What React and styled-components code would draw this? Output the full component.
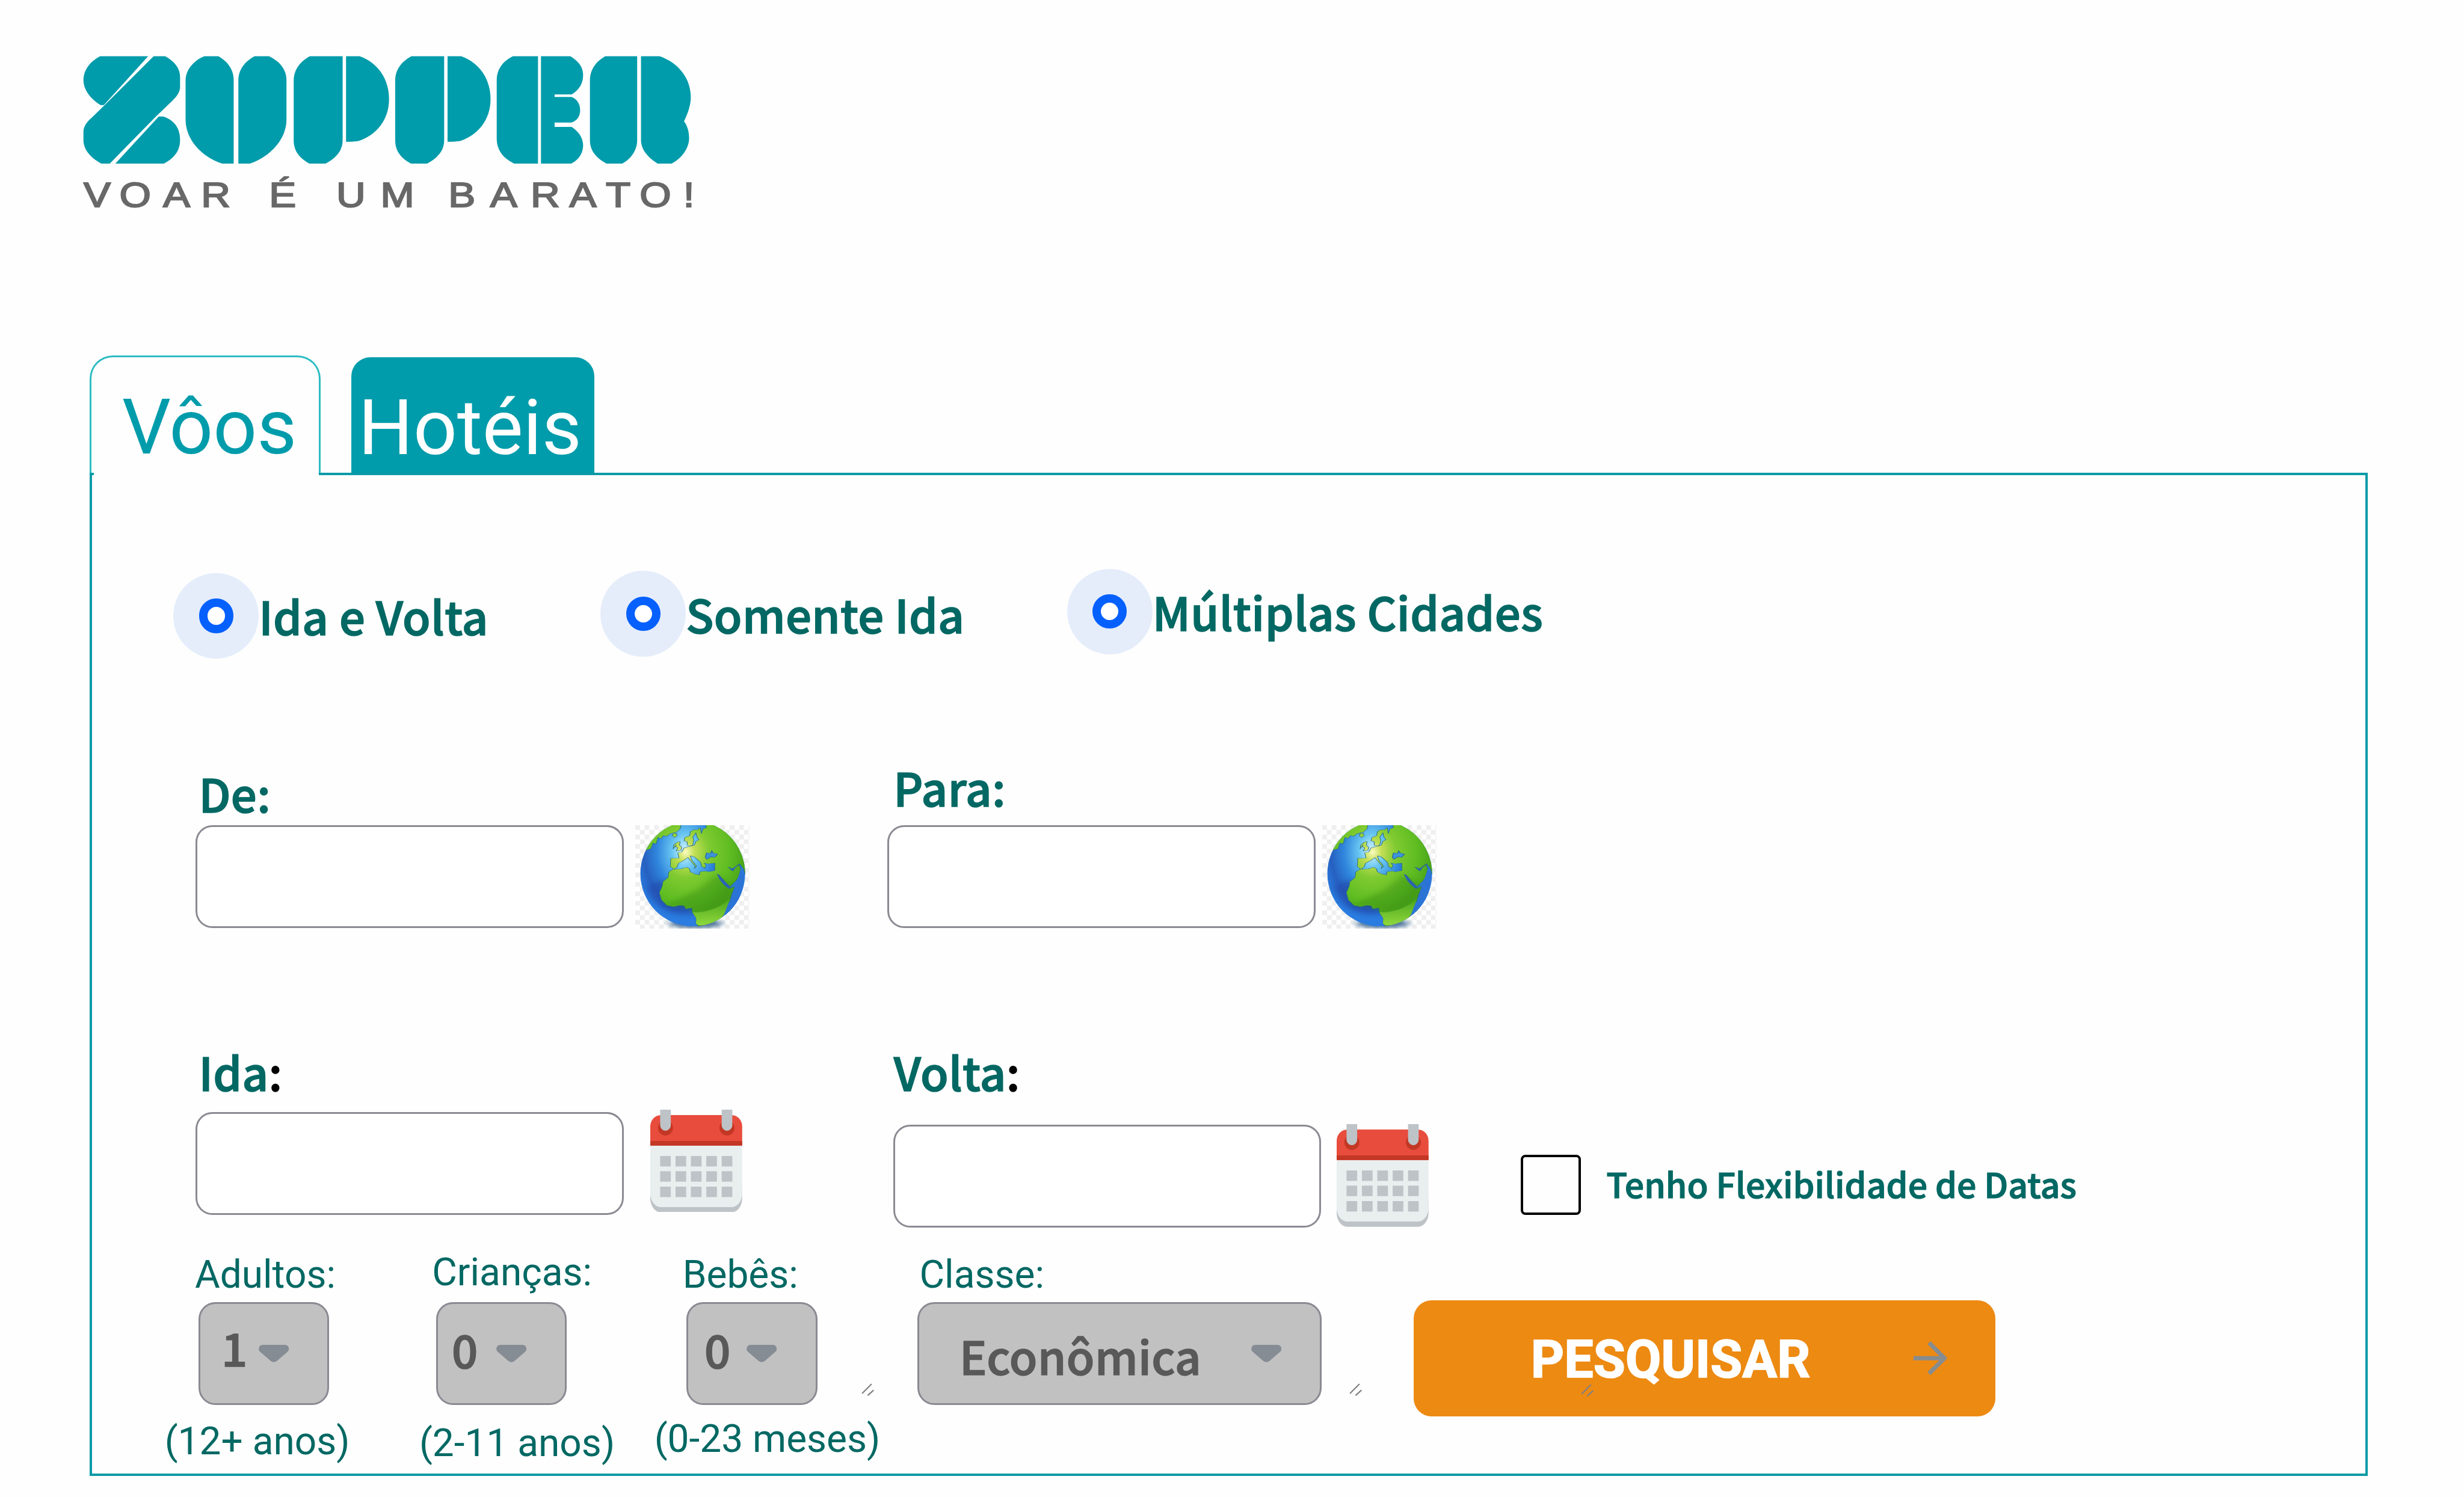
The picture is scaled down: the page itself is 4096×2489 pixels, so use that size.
import React from "react";
import styled, { createGlobalStyle, css } from "styled-components";

/* The page is designed on a 4800-unit wide canvas; 1rem = 100 units. */
const u = (n) => `${n / 100}rem`;

const color = {
  teal: "#009cab",
  line: "#0a9aa7",
  tabLine: "#2dbcc2",
  ink: "#036863",
  border: "#8a8a93",
  field: "#c1c1c2",
  value: "#595959",
  icon: "#868c93",
  orange: "#ed8a12",
  blue: "#0560fd",
  halo: "#e5edfb",
};

/* Medium with a thin stroke gives a semibold weight. */
const sans = css`
  font-family: "Noto Sans CJK JP", "Noto Sans CJK SC", "Noto Sans", sans-serif;
  font-weight: 500;
  -webkit-text-stroke: 0.021em currentColor;
  letter-spacing: 0.0055em;
`;
const roboto = css`
  font-family: Roboto, "Liberation Sans", sans-serif;
`;

const GlobalStyle = createGlobalStyle`
  html { font-size: 85.33333px; }
  body { margin: 0; background: #fefefe; overflow: hidden; }
  *, *::before, *::after { box-sizing: border-box; }
`;

const Page = styled.main`
  width: ${u(4800)};
  height: ${u(2917)};
  overflow: hidden;
`;

const Header = styled.header`
  height: ${u(692)};
  padding: ${u(109.3)} 0 0 ${u(162)};
  display: flex;
  flex-direction: column;
  align-items: flex-start;
`;
const LogoMark = styled.svg`
  display: block;
  width: ${u(1184)};
  height: ${u(209.7)};
`;
const Tagline = styled.svg`
  display: block;
  width: ${u(1240)};
  height: ${u(110)};
`;

const Tabs = styled.nav`
  position: relative;
  z-index: 1;
  display: flex;
  align-items: flex-end;
  height: ${u(229)};
  padding-left: ${u(175)};
`;
const Tab = styled.button`
  ${roboto}
  position: relative;
  margin: 0;
  font-size: ${u(150)};
  font-weight: 400;
  line-height: 1;
  text-align: left;
  white-space: nowrap;
  display: flex;
  align-items: flex-end;
  ${(p) =>
    p.$active
      ? css`
          width: ${u(450)};
          height: ${u(229)};
          padding: 0 0 ${u(13.5)} ${u(59)};
          color: ${color.teal};
          background: #fefefe;
          border: ${u(4)} solid ${color.tabLine};
          border-bottom: 0;
          border-radius: ${u(45)} ${u(45)} 0 0;
          &::after {
            content: "";
            position: absolute;
            left: ${u(4)};
            right: 0;
            bottom: ${u(-6)};
            height: ${u(7)};
            background: #fefefe;
          }
        `
      : css`
          width: ${u(474)};
          height: ${u(225)};
          margin-left: ${u(59)};
          padding: 0 0 ${u(13)} ${u(14)};
          color: #fff;
          background: ${color.teal};
          border: 0;
          border-radius: ${u(37)} ${u(37)} 0 0;
        `}
`;

const Panel = styled.section`
  width: ${u(4438)};
  height: ${u(1955)};
  margin-left: ${u(175)};
  border: ${u(5)} solid ${color.line};
`;
const Row = styled.div`
  display: flex;
  align-items: flex-start;
  height: ${(p) => u(p.$h)};
  padding-left: ${(p) => u(p.$x)};
`;

const RadioOption = styled.label`
  display: flex;
  align-items: center;
  width: ${(p) => u(p.$w)};
  margin-top: ${(p) => u(p.$top)};
`;
const Halo = styled.span`
  flex: none;
  display: flex;
  align-items: center;
  justify-content: center;
  width: ${u(166.5)};
  height: ${u(166.5)};
  border-radius: 50%;
  background: ${color.halo};
`;
const Ring = styled.span`
  width: ${u(67)};
  height: ${u(67)};
  border: ${u(17)} solid ${color.blue};
  border-radius: 50%;
  background: #fff;
`;
const OptionText = styled.span`
  ${sans}
  font-size: ${u(89)};
  line-height: 1;
  color: ${color.ink};
  white-space: nowrap;
`;

const Field = styled.div`
  flex: none;
  width: ${(p) => u(p.$w)};
`;
const FieldLabel = styled.div`
  ${sans}
  display: flex;
  align-items: flex-end;
  height: ${(p) => u(p.$slot)};
  padding-bottom: ${(p) => u(p.$rise)};
  padding-left: ${(p) => u(p.$indent)};
  font-size: ${u(89)};
  line-height: 1;
  color: ${color.ink};
  white-space: nowrap;
`;
const SmallLabel = styled(FieldLabel)`
  ${roboto}
  font-weight: 400;
  font-size: ${u(75)};
  letter-spacing: 0;
  -webkit-text-stroke: 0;
`;
const Black = styled.span`
  color: #000;
`;
const FieldLine = styled.div`
  display: flex;
  align-items: ${(p) => p.$align || "flex-start"};
  padding-left: ${(p) => u(p.$indent || 0)};
`;
const TextBox = styled.input`
  display: block;
  width: ${u(834)};
  height: ${u(200.7)};
  margin: 0;
  padding: 0 ${u(40)};
  border: ${u(4)} solid ${color.border};
  border-radius: ${u(33)};
  background: #fff;
  outline: none;
`;
const GlobeSvg = styled.svg`
  display: block;
  width: ${u(222.5)};
  height: ${u(202)};
  margin-left: ${(p) => u(p.$gap)};
`;
const CalendarSvg = styled.svg`
  display: block;
  width: ${u(179)};
  height: ${u(200)};
  margin-left: ${(p) => u(p.$gap)};
  margin-top: ${(p) => u(p.$lift)};
`;

const CheckOption = styled.label`
  display: flex;
  align-items: center;
  margin-top: ${u(350)};
`;
const CheckBox = styled.span`
  width: ${u(116.5)};
  height: ${u(117)};
  border: ${u(4.8)} solid #000;
  border-radius: ${u(9)};
`;
const CheckText = styled.span`
  ${sans}
  margin-left: ${u(50)};
  padding-bottom: ${u(5)};
  font-size: ${u(67)};
  letter-spacing: 0.001em;
  line-height: 1;
  color: ${color.ink};
  white-space: nowrap;
`;

const Select = styled.div`
  flex: none;
  display: flex;
  align-items: center;
  width: ${(p) => u(p.$w)};
  height: ${u(200.7)};
  padding-left: ${(p) => u(p.$pad)};
  border: ${u(4)} solid ${color.border};
  border-radius: ${u(33)};
  background: ${color.field};
`;
const Value = styled.span`
  ${sans}
  flex: none;
  width: ${(p) => u(p.$w)};
  padding-top: ${(p) => u(p.$down || 0)};
  padding-bottom: ${(p) => u(p.$up || 0)};
  font-size: ${u(89)};
  line-height: 1;
  color: ${color.value};
`;
const CaretSvg = styled.svg`
  flex: none;
  display: block;
  width: ${u(59)};
  height: ${u(34)};
`;
const Hint = styled.div`
  ${roboto}
  margin-top: ${(p) => u(p.$top)};
  margin-left: ${u(-4)};
  font-size: ${u(75)};
  line-height: 1;
  color: ${color.ink};
  white-space: nowrap;
`;
const gripBase = css`
  display: block;
  width: ${u(25)};
  height: ${u(25)};
`;
const GripSvg = styled.svg`
  ${gripBase}
  margin-left: ${(p) => u(p.$gap)};
  margin-bottom: ${u(17)};
`;
const FloatingGrip = styled.svg`
  ${gripBase}
  position: absolute;
  left: ${u(326)};
  top: ${u(163)};
`;

const SearchButton = styled.button`
  ${roboto}
  position: relative;
  flex: none;
  display: flex;
  align-items: center;
  width: ${u(1133)};
  height: ${u(225.5)};
  margin: ${u(104.3)} 0 0 ${u(1)};
  padding: 0 0 0 ${u(228)};
  border: 0;
  border-radius: ${u(35)};
  background: ${color.orange};
  color: #fff;
  text-align: left;
`;
const SearchText = styled.span`
  width: ${u(745.4)};
  padding-top: ${u(7)};
  font-size: ${u(101)};
  font-weight: 700;
  line-height: 1;
  -webkit-text-stroke: ${u(2)} #fff;
`;
const ArrowSvg = styled.svg`
  display: block;
  width: ${u(66)};
  height: ${u(66)};
`;

const Logo = () => (
  <>
    <LogoMark viewBox="75 148 1428 629" preserveAspectRatio="none" fill={color.teal} role="img">
      <path d="M115 150H228L124 435H116C90 395 76 340 76 290C76 230 92 180 115 150Z" />
      <path d="M241 150H268C290 180 303 220 303 270V330C303 360 295 385 285 410L247 500L138 777H118C90 740 76 690 76 640V590C76 560 85 530 95 510L124 440Z" />
      <path d="M253 502H264C290 525 303 570 303 640C303 700 290 745 265 777H151Z" />
      <path d="M360 150H393C415 180 429 230 429 290V777H402C355 740 316 640 316 520V290C316 230 335 175 360 150Z" />
      <path d="M478 150H512C538 180 553 230 553 290V520C553 640 512 740 467 777H440V290C440 230 455 180 478 150Z" />
      {[0, 238.5].map((dx) => (
        <g key={dx} transform={`translate(${dx} 0)`}>
          <path d="M608 150H685V640C685 700 670 745 645 777H607C582 745 570 700 570 640V290C570 230 585 180 608 150Z" />
          <path d="M693 150H725C770 190 794 290 794 400C794 520 765 610 722 645Q710 650 693 650Z" />
        </g>
      ))}
      <path d="M1085 150H1144V777H1088C1062 745 1047 700 1047 630V290C1047 230 1060 180 1085 150Z" />
      <path d="M1151 150H1220C1240 180 1250 215 1250 260C1250 310 1240 350 1223 373H1183V388H1223C1236 400 1243 430 1243 465C1243 500 1236 525 1223 537H1183V563H1223C1240 590 1250 630 1250 670C1250 715 1240 755 1222 777H1151Z" />
      <path d="M1302 150H1377V640C1377 700 1362 750 1342 777H1305C1280 745 1266 700 1266 640V290C1266 230 1280 180 1302 150Z" />
      <path d="M1386 150H1430C1475 190 1503 280 1503 390C1503 440 1495 490 1487 530C1495 555 1499 590 1499 630C1499 690 1480 750 1458 777H1425C1400 740 1386 690 1386 640Z" />
    </LogoMark>
    <Tagline viewBox="0 0 1240 110">
      <text
        transform="scale(1.18 1)"
        y="84.500"
        x="1 60 132 195 251 307 362 418 491 551 603 672 739 803 863 919 991"
        fontFamily="Liberation Sans, sans-serif"
        fontSize="67"
        fill="#686868"
        stroke="#686868"
        strokeWidth="2.400"
      >
        VOAR É UM BARATO!
      </text>
    </Tagline>
  </>
);

const Globe = ({ id, gap }) => (
  <GlobeSvg $gap={gap} viewBox="1172 384 290 602" preserveAspectRatio="none">
    <defs>
      <pattern id={`${id}-check`} width="24" height="55" x="1172" y="384" patternUnits="userSpaceOnUse">
        <rect width="24" height="55" fill="#fff" />
        <rect width="12" height="27.5" fill="#efefef" />
        <rect x="12" y="27.5" width="12" height="27.5" fill="#efefef" />
      </pattern>
      <clipPath id={`${id}-clip`}>
        <ellipse cx="1318" cy="665" rx="133" ry="306" />
      </clipPath>
      <radialGradient id={`${id}-sea`} gradientUnits="userSpaceOnUse" cx="0" cy="0" r="1" gradientTransform="translate(1298 535) scale(130 400)">
        <stop offset="0" stopColor="#d8f6ff" />
        <stop offset="0.25" stopColor="#69c6f2" />
        <stop offset="0.55" stopColor="#2f86dc" />
        <stop offset="0.8" stopColor="#2660c0" />
        <stop offset="1" stopColor="#2a7ce0" />
      </radialGradient>
      <radialGradient id={`${id}-land`} gradientUnits="userSpaceOnUse" cx="0" cy="0" r="1" gradientTransform="translate(1300 540) scale(150 380)">
        <stop offset="0" stopColor="#fbfbc0" />
        <stop offset="0.15" stopColor="#c3df55" />
        <stop offset="0.4" stopColor="#7fca30" />
        <stop offset="0.75" stopColor="#5fbd22" />
        <stop offset="1" stopColor="#4aa51a" />
      </radialGradient>
      <linearGradient id={`${id}-low`} x1="0" y1="0" x2="0" y2="1">
        <stop offset="0" stopColor="#4aa51c" />
        <stop offset="1" stopColor="#8fd83c" />
      </linearGradient>
      <filter id={`${id}-blur`} x="-30%" y="-80%" width="160%" height="260%">
        <feGaussianBlur stdDeviation="9 12" />
      </filter>
    </defs>
    <rect x="1172" y="384" width="290" height="602" fill={`url(#${id}-check)`} />
    <ellipse cx="1325" cy="955" rx="68" ry="28" fill="#1c4f80" opacity="0.75" filter={`url(#${id}-blur)`} />
    <g clipPath={`url(#${id}-clip)`}>
      <rect x="1172" y="350" width="290" height="640" fill={`url(#${id}-sea)`} />
      <path d="M1203 740C1215 860 1265 910 1317 890V840L1240 700Z" fill="#2347a8" opacity="0.55" filter={`url(#${id}-blur)`} />
      <g stroke="#2a6a86" strokeWidth="1.6" strokeLinejoin="round" fill={`url(#${id}-land)`}>
        <path d="M1300 380L1288 384L1286 405L1276 425L1262 432L1252 448L1243 445L1238 462L1230 455L1225 492L1217 488L1212 520L1198 530L1180 500L1220 380Z" />
        <path d="M1268 432L1276 430L1279 445L1272 456L1266 446Z" />
        <path d="M1279 482L1286 480L1284 500L1290 512L1288 530L1276 534L1280 515L1274 510L1276 498L1268 522L1270 498Z" />
        <path d="M1352 380L1352 400L1344 405L1340 432L1337 398L1330 410L1318 412L1312 422L1310 445L1298 455L1296 475L1304 480L1304 500L1312 504L1318 500L1321 470L1318 455L1326 428L1329 455L1334 468L1326 478L1322 500L1308 508L1296 516L1290 540L1280 545L1283 575L1262 576L1261 625L1270 640L1278 628L1282 605L1296 588L1306 572L1312 590L1324 622L1322 636L1328 622L1316 588L1312 562L1322 568L1338 600L1340 622L1348 635L1352 618L1347 605L1358 608L1374 604V648L1358 655L1350 650L1336 655L1335 672L1324 668L1312 655L1310 638L1303 628L1288 638L1268 640L1257 655L1255 688L1242 712L1240 740L1233 775L1238 818L1252 850L1270 858L1284 850L1296 852L1300 870L1316 865L1317 890L1327 925L1326 955L1338 985L1380 975L1398 900L1397 870L1412 825L1416 790L1425 740L1412 752L1399 728L1385 685L1380 670L1384 672L1399 710L1412 742L1426 712L1434 690L1440 640L1436 612L1425 632L1420 650L1408 628L1418 638L1437 608L1447 640L1451 670H1470V380Z" />
        <path d="M1408 880L1415 850L1418 870L1410 900L1402 898Z" />
      </g>
      <path d="M1251 845L1270 856L1284 850L1296 852L1300 870L1316 865V890C1350 890 1390 870 1414 800L1424 742L1380 670L1330 760Z" fill="#2f7e10" opacity="0.32" filter={`url(#${id}-blur)`} />
      <path d="M1424 745L1440 640L1449 672L1445 740C1440 810 1425 870 1400 910L1398 890L1413 825Z" fill="#2b74d6" />
      <path d="M1317 890C1350 892 1385 870 1413 810L1398 900L1375 965H1332L1326 955L1327 925Z" fill={`url(#${id}-low)`} />
      <path d="M1350 570L1353 545L1364 548L1366 532L1370 546L1381 552L1374 570L1364 568L1354 582Z" fill="#3d93da" stroke="#255f9c" strokeWidth="2" />
      <path d="M1380 668L1385 674L1400 712L1413 740L1410 754L1396 728L1386 700Z" fill="#2c62b4" />
      <path d="M1408 626L1418 636L1426 634L1420 648L1416 646Z" fill="#2c62b4" />
    </g>
  </GlobeSvg>
);

const Calendar = ({ gap, lift }) => (
  <CalendarSvg $gap={gap} $lift={lift} viewBox="1211 426 233 600" preserveAspectRatio="none">
    <rect x="1211" y="800" width="233" height="226" rx="27" ry="80" fill="#bdc3c7" />
    <path d="M1211 620H1444V916C1444 960 1432 996 1417 996H1238C1223 996 1211 960 1211 916Z" fill="#e9eeef" />
    <path d="M1211 636V524C1211 488 1223 458 1238 458H1417C1432 458 1444 488 1444 524V636Z" fill="#e84c3d" />
    <rect x="1211" y="609" width="233" height="27" fill="#c33725" />
    {[1236, 1392].map((x) => (
      <g key={x}>
        <ellipse cx={x + 13.5} cy="533" rx="19" ry="44" fill="#c33725" />
        <path d={`M${x} 426h27v90c0 18-6 33-13.500 33s-13.500-15-13.500-33z`} fill="#bdc3c7" />
      </g>
    ))}
    {[697, 786, 876].map((y) =>
      [1236, 1275, 1314, 1353, 1392].map((x) => (
        <rect key={`${x}-${y}`} x={x} y={y} width="27" height="61" fill="#bdc3c7" />
      ))
    )}
  </CalendarSvg>
);

const Caret = () => (
  <CaretSvg viewBox="0 0 59 34" fill={color.icon}>
    <path d="M8 0H51C58 0 61 8 57 13L36 31Q29.500 36.500 23 31L2 13C-2 8 1 0 8 0Z" />
  </CaretSvg>
);

const gripLines = <path d="M2 19L19 2M13 23L23 14" stroke="#808083" strokeWidth="2.600" strokeLinecap="round" />;

const trips = [
  { text: "Ida e Volta", top: 191, w: 832 },
  { text: "Somente Ida", top: 187, w: 909 },
  { text: "Múltiplas Cidades", top: 182.5, w: 1000 },
];

const passengers = [
  { label: "Adultos:", rise: 15, indent: 55, box: 62, w: 496, value: "1", pad: 41, vw: 73, up: 24, hint: "(12+ anos)", hintTop: 34 },
  { label: "Crianças:", rise: 19.5, indent: 21, box: 29, w: 458, value: "0", pad: 27, vw: 87, up: 18, hint: "(2-11 anos)", hintTop: 38 },
  { label: "Bebês:", rise: 15, indent: 51, box: 59, w: 508, value: "0", pad: 31, vw: 82, up: 18, hint: "(0-23 meses)", hintTop: 30, grip: true },
];

export default function App() {
  return (
    <Page>
      <GlobalStyle />
      <Header>
        <Logo />
      </Header>
      <Tabs>
        <Tab $active>Vôos</Tab>
        <Tab>Hotéis</Tab>
      </Tabs>
      <Panel>
        <Row $h={374} $x={158}>
          {trips.map((t) => (
            <RadioOption key={t.text} $top={t.top} $w={t.w}>
              <Halo>
                <Ring />
              </Halo>
              <OptionText>{t.text}</OptionText>
            </RadioOption>
          ))}
        </Row>

        <Row $h={600} $x={201}>
          <Field $w={1348}>
            <FieldLabel $slot={308} $rise={17} $indent={6.5}>De:</FieldLabel>
            <FieldLine>
              <TextBox />
              <Globe id="from" gap={23} />
            </FieldLine>
          </Field>
          <Field $w={1100}>
            <FieldLabel $slot={308} $rise={29} $indent={12}>Para:</FieldLabel>
            <FieldLine>
              <TextBox />
              <Globe id="to" gap={13} />
            </FieldLine>
          </Field>
        </Row>

        <Row $h={530} $x={201}>
          <Field $w={1359}>
            <FieldLabel $slot={266.7} $rise={34} $indent={6.5}>
              Ida<Black>:</Black>
            </FieldLabel>
            <FieldLine>
              <TextBox />
              <Calendar gap={52} lift={-4.5} />
            </FieldLine>
          </Field>
          <Field $w={1223}>
            <FieldLabel $slot={291.7} $rise={59} $indent={1.5}>
              Volta<Black>:</Black>
            </FieldLabel>
            <FieldLine>
              <TextBox />
              <Calendar gap={30} lift={-0.7} />
            </FieldLine>
          </Field>
          <CheckOption>
            <CheckBox />
            <CheckText>Tenho Flexibilidade de Datas</CheckText>
          </CheckOption>
        </Row>

        <Row $h={440} $x={145}>
          {passengers.map((p) => (
            <Field key={p.label} $w={p.w}>
              <SmallLabel $slot={107} $rise={p.rise} $indent={p.indent}>{p.label}</SmallLabel>
              <FieldLine $indent={p.box} $align="flex-end">
                <Select $w={254.5} $pad={p.pad}>
                  <Value $w={p.vw} $up={p.up}>{p.value}</Value>
                  <Caret />
                </Select>
                {p.grip && (
                  <GripSvg $gap={86} viewBox="0 0 25 25" fill="none">{gripLines}</GripSvg>
                )}
              </FieldLine>
              <Hint $top={p.hintTop}>{p.hint}</Hint>
            </Field>
          ))}
          <Field $w={966.6}>
            <SmallLabel $slot={107} $rise={15} $indent={4.5}>Classe:</SmallLabel>
            <FieldLine $align="flex-end">
              <Select $w={787.5} $pad={79}>
                <Value $w={568.5} $down={9}>Econômica</Value>
                <Caret />
              </Select>
              <GripSvg $gap={54} viewBox="0 0 25 25" fill="none">{gripLines}</GripSvg>
            </FieldLine>
          </Field>
          <SearchButton>
            <SearchText>PESQUISAR</SearchText>
            <ArrowSvg viewBox="4 4 16 16" fill="#868c8f">
              <path d="M12 4l-1.410 1.410L16.170 11H4v2h12.170l-5.580 5.590L12 20l8-8z" />
            </ArrowSvg>
            <FloatingGrip viewBox="0 0 25 25" fill="none">{gripLines}</FloatingGrip>
          </SearchButton>
        </Row>
      </Panel>
    </Page>
  );
}
